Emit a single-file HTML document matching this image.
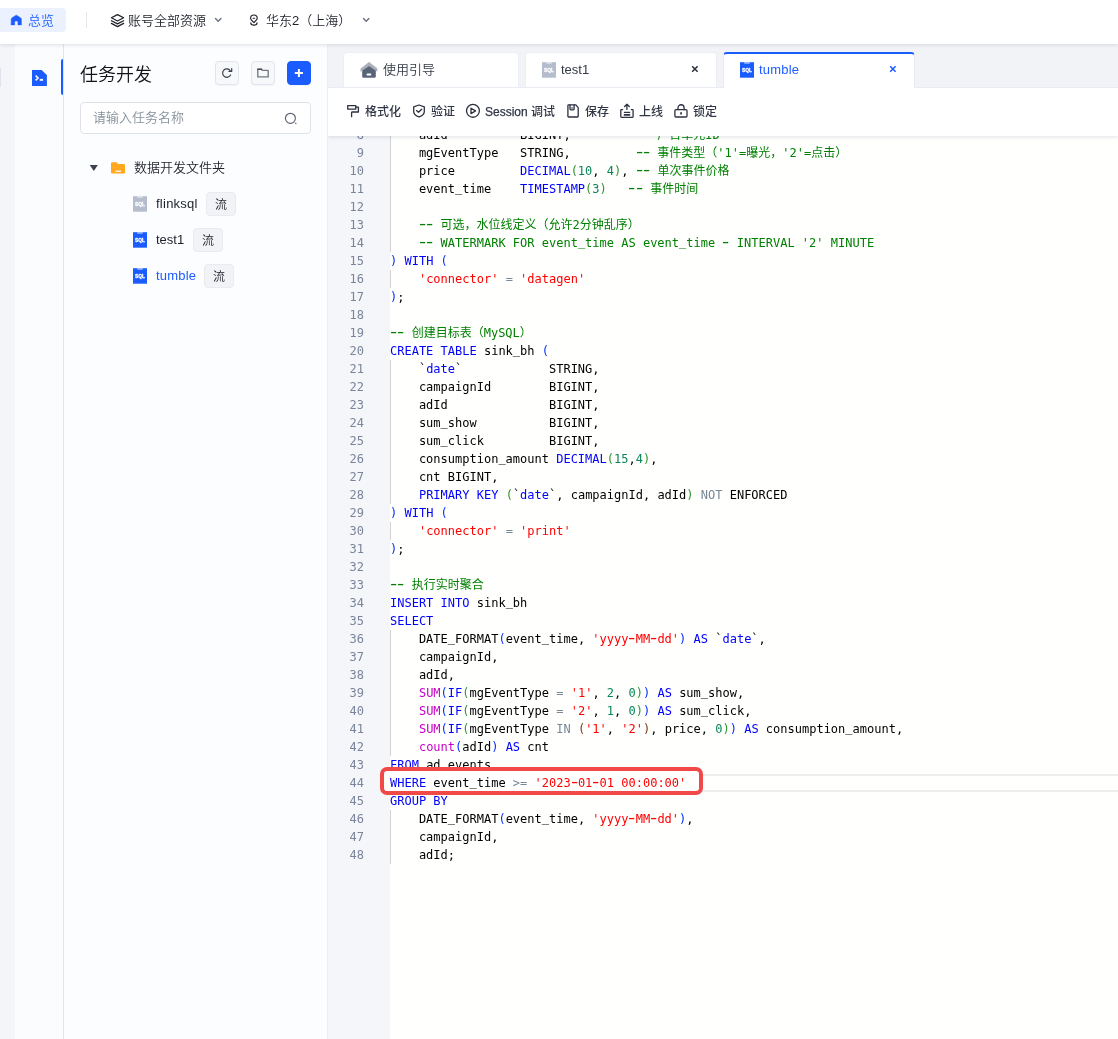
<!DOCTYPE html>
<html lang="zh-CN">
<head>
<meta charset="utf-8">
<title>任务开发</title>
<style>
*{box-sizing:border-box;margin:0;padding:0}
html,body{width:1118px;height:1039px;overflow:hidden;background:#fff}
body{position:relative;font-family:"Liberation Sans","Noto Sans CJK SC",sans-serif;font-size:13px;color:#1d2129;font-weight:350}
#root{position:absolute;left:0;top:0;width:1118px;height:1039px;will-change:transform}
.abs{position:absolute}
svg{display:block;overflow:visible}
/* top bar */
#top{position:absolute;left:0;top:0;width:1118px;height:44px;background:#fff;box-shadow:0 1px 4px rgba(20,30,60,.13);z-index:20}
#top .pill{position:absolute;left:-6px;top:8px;width:72px;height:24px;border-radius:4px;background:#ebf1ff}
#top .t{position:absolute;top:1px;height:40px;line-height:40px;font-size:13px;color:#1d2129;white-space:nowrap}
/* far-left strip */
#strip0{position:absolute;left:0;top:44px;width:15px;height:995px;background:#f4f5f9}
#strip1{position:absolute;left:15px;top:44px;width:48px;height:995px;background:#fbfcfe}
#vline{position:absolute;left:63px;top:44px;width:1px;height:995px;background:#e3e5ea}
#ind{position:absolute;left:61px;top:59px;width:2px;height:36px;background:#1b5cff;border-radius:2px 0 0 2px}
/* left panel */
#panel{position:absolute;left:64px;top:44px;width:263px;height:995px;background:#fcfdfe}
#pline{position:absolute;left:327px;top:44px;width:1px;height:995px;background:#eceef2}
.h1{position:absolute;left:80px;top:61.5px;height:26px;line-height:26px;font-size:18px;color:#111318;white-space:nowrap}
.ibtn{position:absolute;top:61px;width:24px;height:24px;border-radius:4px;background:#f7f8fa;border:1px solid #e2e6ee;box-shadow:0 1px 1px rgba(30,40,80,.05)}
.ibtn.blue{background:#1b5cff;border-color:#1b5cff}
#search{position:absolute;left:80px;top:102px;width:231px;height:32px;border:1px solid #dfe2e8;border-radius:4px;background:#fff}
#search span{position:absolute;left:12px;top:0;line-height:30px;font-size:13px;color:#86909c}
.row{position:absolute;height:24px;line-height:24px;font-size:13px;white-space:nowrap;color:#1d2129}
.tag{position:absolute;height:24px;width:30px;border:1px solid #e9ebf0;background:#f2f3f6;border-radius:4px;font-size:12px;line-height:22px;padding-top:1px;text-align:center;color:#1d2129}
/* editor area */
#area{position:absolute;left:328px;top:44px;width:790px;height:995px;background:#f2f3f7}
.tab{position:absolute;top:52px;height:36px;background:#fff;border:1px solid #eceef3;border-bottom:none;border-radius:4px 4px 0 0}
.tab .tx{position:absolute;top:0;line-height:33px;font-size:13px;color:#333946;white-space:nowrap}
.tab.act{border:1px solid #e8ebf2;border-bottom:none;border-top:2px solid #1b5cff;z-index:11}
.tab.act .tx{color:#1b5cff;line-height:31px;margin-left:-1px}
#tool{position:absolute;left:328px;top:87px;width:790px;height:49px;background:#fff;border-top:1px solid #e9ecf2;box-shadow:0 2px 3px rgba(20,30,60,.09);z-index:10;clip-path:inset(0 0 -10px 0)}
#tool .ti{position:absolute;top:-1px;line-height:51px;font-size:12px;font-weight:500;color:#303645;white-space:nowrap}
/* code */
#gutter{position:absolute;left:328px;top:126px;width:62px;height:913px;background:#f5f6fa}
#codebg{position:absolute;left:390px;top:126px;width:728px;height:913px;background:#fffffe}
#nums{position:absolute;left:328px;top:126px;width:36px;text-align:right}
#nums div,#code div{height:18px;line-height:18px;font-family:"DejaVu Sans Mono","Liberation Mono","Noto Sans CJK SC",monospace;font-size:12px;white-space:pre}
#nums div{color:#7a849a}
#code{position:absolute;left:390px;top:126px;color:#000;font-weight:400}
#code div{position:relative}
.k{color:#0000ff}.s{color:#ff0000}.c{color:#008000}.n{color:#098658}.o{color:#778899}.f{color:#c700c7}
#code i{font-style:normal;display:inline-block;transform:translateY(-0.7px) scale(1.7,1.25)}
#code b{font-weight:normal;display:inline-block;transform:translateY(-1px)}
.b1{color:#0431fa}.b2{color:#319331}.b3{color:#7b3814}
.g{position:absolute;left:390px;width:1px;background:#d3d3d3}
#cur{position:absolute;left:390px;top:774px;width:740px;height:18px;border:2px solid #eee}
#red{position:absolute;left:-10px;top:-7px;z-index:-1;width:323px;height:28px;border:4px solid #f14848;border-radius:7px;background:#fff}
</style>
</head>
<body>
<div id="root">

<!-- far-left strips and panel -->
<div id="strip0"></div><div class="abs" style="left:0;top:68px;width:1px;height:19px;background:#dfe3ec"></div><div id="strip1"></div><div id="vline"></div>
<div id="panel"></div><div id="pline"></div>
<div id="area"></div>

<!-- code editor -->
<div id="gutter"></div><div id="codebg"></div>
<div id="cur"></div>
<div class="g" style="top:126px;height:126px"></div>
<div class="g" style="top:270px;height:18px"></div>
<div class="g" style="top:360px;height:144px"></div>
<div class="g" style="top:522px;height:18px"></div>
<div class="g" style="top:630px;height:126px"></div>
<div class="g" style="top:810px;height:54px"></div>
<div id="nums"><div>8</div><div>9</div><div>10</div><div>11</div><div>12</div><div>13</div><div>14</div><div>15</div><div>16</div><div>17</div><div>18</div><div>19</div><div>20</div><div>21</div><div>22</div><div>23</div><div>24</div><div>25</div><div>26</div><div>27</div><div>28</div><div>29</div><div>30</div><div>31</div><div>32</div><div>33</div><div>34</div><div>35</div><div>36</div><div>37</div><div>38</div><div>39</div><div>40</div><div>41</div><div>42</div><div>43</div><div>44</div><div>45</div><div>46</div><div>47</div><div>48</div></div>
<div id="code">
<div>    adId          BIGINT,         <span class="c"><i>-</i><i>-</i> 广告单元ID</span></div>
<div>    mgEventType   STRING,         <span class="c"><i>-</i><i>-</i> 事件类型（'1'=曝光，'2'=点击）</span></div>
<div>    price         <span class="k">DECIMAL</span><span class="b2">(</span><span class="n">10</span>, <span class="n">4</span><span class="b2">)</span>, <span class="c"><i>-</i><i>-</i> 单次事件价格</span></div>
<div>    event<b>_</b>time    <span class="k">TIMESTAMP</span><span class="b2">(</span><span class="n">3</span><span class="b2">)</span>   <span class="c"><i>-</i><i>-</i> 事件时间</span></div>
<div> </div>
<div>    <span class="c"><i>-</i><i>-</i> 可选，水位线定义（允许2分钟乱序）</span></div>
<div>    <span class="c"><i>-</i><i>-</i> WATERMARK FOR event<b>_</b>time AS event<b>_</b>time <i>-</i> INTERVAL '2' MINUTE</span></div>
<div><span class="b1">)</span> <span class="k">WITH</span> <span class="b1">(</span></div>
<div>    <span class="s">'connector'</span> <span class="o">=</span> <span class="s">'datagen'</span></div>
<div><span class="b1">)</span>;</div>
<div> </div>
<div><span class="c"><i>-</i><i>-</i> 创建目标表（MySQL）</span></div>
<div><span class="k">CREATE</span> <span class="k">TABLE</span> sink<b>_</b>bh <span class="b1">(</span></div>
<div>    `<span class="k">date</span>`            STRING,</div>
<div>    campaignId        BIGINT,</div>
<div>    adId              BIGINT,</div>
<div>    sum<b>_</b>show          BIGINT,</div>
<div>    sum<b>_</b>click         BIGINT,</div>
<div>    consumption<b>_</b>amount <span class="k">DECIMAL</span><span class="b2">(</span><span class="n">15</span>,<span class="n">4</span><span class="b2">)</span>,</div>
<div>    cnt BIGINT,</div>
<div>    <span class="k">PRIMARY</span> <span class="k">KEY</span> <span class="b2">(</span>`<span class="k">date</span>`, campaignId, adId<span class="b2">)</span> <span class="o">NOT</span> ENFORCED</div>
<div><span class="b1">)</span> <span class="k">WITH</span> <span class="b1">(</span></div>
<div>    <span class="s">'connector'</span> <span class="o">=</span> <span class="s">'print'</span></div>
<div><span class="b1">)</span>;</div>
<div> </div>
<div><span class="c"><i>-</i><i>-</i> 执行实时聚合</span></div>
<div><span class="k">INSERT</span> <span class="k">INTO</span> sink<b>_</b>bh</div>
<div><span class="k">SELECT</span></div>
<div>    DATE<b>_</b>FORMAT<span class="b1">(</span>event<b>_</b>time, <span class="s">'yyyy<i>-</i>MM<i>-</i>dd'</span><span class="b1">)</span> <span class="k">AS</span> `<span class="k">date</span>`,</div>
<div>    campaignId,</div>
<div>    adId,</div>
<div>    <span class="f">SUM</span><span class="b1">(</span><span class="k">IF</span><span class="b2">(</span>mgEventType <span class="o">=</span> <span class="s">'1'</span>, <span class="n">2</span>, <span class="n">0</span><span class="b2">)</span><span class="b1">)</span> <span class="k">AS</span> sum<b>_</b>show,</div>
<div>    <span class="f">SUM</span><span class="b1">(</span><span class="k">IF</span><span class="b2">(</span>mgEventType <span class="o">=</span> <span class="s">'2'</span>, <span class="n">1</span>, <span class="n">0</span><span class="b2">)</span><span class="b1">)</span> <span class="k">AS</span> sum<b>_</b>click,</div>
<div>    <span class="f">SUM</span><span class="b1">(</span><span class="k">IF</span><span class="b2">(</span>mgEventType <span class="o">IN</span> <span class="b3">(</span><span class="s">'1'</span>, <span class="s">'2'</span><span class="b3">)</span>, price, <span class="n">0</span><span class="b2">)</span><span class="b1">)</span> <span class="k">AS</span> consumption<b>_</b>amount,</div>
<div>    <span class="f">count</span><span class="b1">(</span>adId<span class="b1">)</span> <span class="k">AS</span> cnt</div>
<div><span class="k">FROM</span> ad<b>_</b>events</div>
<div style="z-index:5"><span id="red"></span><span class="k">WHERE</span> event<b>_</b>time <span class="o">&gt;=</span> <span class="s">'2023<i>-</i>01<i>-</i>01 00:00:00'</span></div>
<div><span class="k">GROUP</span> <span class="k">BY</span></div>
<div>    DATE<b>_</b>FORMAT<span class="b1">(</span>event<b>_</b>time, <span class="s">'yyyy<i>-</i>MM<i>-</i>dd'</span><span class="b1">)</span>,</div>
<div>    campaignId,</div>
<div>    adId;</div>
</div>

<!-- tabs -->
<div class="tab" style="left:343px;width:176px"><span class="tx" style="left:39px">使用引导</span></div>
<div class="tab" style="left:525px;width:192px"><span class="tx" style="left:35px">test1</span></div>
<div class="tab act" style="left:723px;width:192px"><span class="tx" style="left:36px;letter-spacing:0.2px">tumble</span></div>

<!-- toolbar -->
<div id="tool">
<span class="ti" style="left:37px">格式化</span>
<span class="ti" style="left:103px">验证</span>
<span class="ti" style="left:157px"><span style="-webkit-text-stroke:0.25px #303645">Session</span> 调试</span>
<span class="ti" style="left:257px">保存</span>
<span class="ti" style="left:311px">上线</span>
<span class="ti" style="left:365px">锁定</span>
</div>

<!-- left panel content -->
<div id="ind"></div>
<div class="h1">任务开发</div>
<div class="ibtn" style="left:215px"></div>
<div class="ibtn" style="left:251px"></div>
<div class="ibtn blue" style="left:287px"></div>
<div id="search"><span>请输入任务名称</span></div>
<div class="row" style="left:134px;top:156px">数据开发文件夹</div>
<div class="row" style="left:156px;top:192px;letter-spacing:0.25px">flinksql</div><div class="tag" style="left:206px;top:192px">流</div>
<div class="row" style="left:156px;top:228px">test1</div><div class="tag" style="left:193px;top:228px">流</div>
<div class="row" style="left:156px;top:264px;color:#1b5cff;letter-spacing:0.2px">tumble</div><div class="tag" style="left:204px;top:264px">流</div>

<!-- top bar -->
<div id="top">
<div class="pill"></div>
<span class="t" style="left:28px;color:#1b5cff">总览</span>
<div class="abs" style="left:86px;top:12px;width:1px;height:16px;background:#e5e6eb"></div>
<span class="t" style="left:128px">账号全部资源</span>
<span class="t" style="left:266px">华东2（上海）</span>
</div>


<!-- icon overlay -->
<svg id="icons" width="1118" height="1039" viewBox="0 0 1118 1039" style="position:absolute;left:0;top:0;z-index:30" fill="none" stroke-linecap="round" stroke-linejoin="round">
<defs>
<g id="sqlg"><path d="M0,0.2 H14 V15.7 H0 Z" stroke="none"/><path d="M4,0.2 L4.5,1.7 H9.5 L10,0.2 Z" fill="#fff" fill-opacity="0.6" stroke="none"/><text x="7" y="10.25" text-anchor="middle" font-family="Liberation Sans, sans-serif" font-weight="bold" font-size="4.8" fill="#fff" stroke="#fff" stroke-width="0.3">SQL</text></g>
<g id="chev"><path d="M0.5,0.2 L3.2,2.9 L5.9,0.2" stroke="#687082" stroke-width="1.4"/></g>
<g id="xx"><path d="M0,0 L5.4,5.4 M5.4,0 L0,5.4" stroke-width="1.55" stroke-linecap="butt"/></g>
</defs>
<!-- top bar: home -->
<path d="M11.2,19.1 Q11.2,18.5 11.7,18.1 L15.5,15.4 Q16.3,14.9 17.1,15.4 L20.9,18.1 Q21.4,18.5 21.4,19.1 V24.9 H17.9 V21.9 Q17.9,21 17,21 H15.6 Q14.7,21 14.7,21.9 V24.9 H11.2 Z" fill="#1b5cff" stroke="#1b5cff" stroke-width="0.4"/>
<!-- layers -->
<g stroke="#1d2129" stroke-width="1.25"><path d="M117.5,14.6 L123.6,17.8 L117.5,21 L111.4,17.8 Z"/><path d="M111.4,20.7 L117.5,23.9 L123.6,20.7"/><path d="M111.4,23.4 L117.5,26.6 L123.6,23.4"/></g>
<use href="#chev" x="215" y="18.3"/>
<!-- location -->
<g stroke="#1d2129" stroke-width="1.15"><path d="M253.9,22.6 C251.6,20.6 250.6,19.6 250.6,18.3 A3.3,3.3 0 0 1 257.2,18.3 C257.2,19.6 256.2,20.6 253.9,22.6 Z"/><path d="M253.2,18.2 H254.6"/><path d="M250.8,22.9 Q250.8,25.1 253.9,25.1 Q257,25.1 257,22.9"/></g>
<use href="#chev" x="363" y="18.3"/>
<!-- far-left file icon -->
<path d="M32,70 H41.6 L46.9,74.9 V86 H32 Z" fill="#1b5cff"/>
<path d="M35.6,75.6 L38.1,78 L35.6,80.4" stroke="#fff" stroke-width="1.5" stroke-linejoin="miter" stroke-linecap="butt"/><rect x="39.7" y="78.9" width="3.4" height="1.9" fill="#fff"/>
<!-- refresh -->
<g stroke="#3a3f4b" stroke-width="1.2"><path d="M230.6,75 A4.2,4.2 0 1 1 230.2,70.6"/><path d="M231.7,68.7 V71.4 H229"/></g>
<!-- folder outline -->
<g stroke="#73777f" stroke-width="1.35"><path d="M257.8,69.3 H261.4 L262.3,70.3 H268.2 V76.9 H257.8 Z"/></g><path d="M257.6,69.2 H261.6" stroke="#3c3f48" stroke-width="1.3"/>
<!-- plus -->
<path d="M294.8,73 H303 M298.9,68.9 V77.1" stroke="#fff" stroke-width="2" stroke-linecap="butt"/>
<!-- search -->
<g stroke="#5d6473" stroke-width="1.15"><circle cx="290.4" cy="118.3" r="5"/><path d="M295.6,123.2 L296,123.6"/></g>
<!-- caret -->
<path d="M89.7,165 H97.9 L93.8,171 Z" fill="#3d4250"/>
<!-- folder filled -->
<path d="M111,163.2 Q111,162.2 112,162.2 H116.6 L118.3,164 H124 Q125,164 125,165 V172.6 Q125,173.6 124,173.6 H112 Q111,173.6 111,172.6 Z" fill="#ffa820"/><rect x="115.4" y="170.6" width="5.6" height="1.2" fill="#fff"/>
<!-- sql icons -->
<use href="#sqlg" x="133" y="196" fill="#b4bccd"/>
<use href="#sqlg" x="133" y="232" fill="#1b5cff"/>
<use href="#sqlg" x="133" y="268" fill="#1b5cff"/>
<use href="#sqlg" x="542" y="62" fill="#b4bccd"/>
<use href="#sqlg" x="740" y="62" fill="#1b5cff"/>
<!-- tab home icon -->
<path d="M360.9,68.5 L369,62.2 L377.1,68.5 V71.2 L369,66 L360.9,71.2 Z" fill="#a9afbb" stroke="#a9afbb" stroke-width="0.5"/>
<path d="M362.2,70.4 L369,66 L375.8,70.4 V76.2 Q375.8,77.7 374.3,77.7 H363.7 Q362.2,77.7 362.2,76.2 Z" fill="#5a6478"/>
<rect x="366.6" y="73.5" width="4.6" height="1.9" rx="0.5" fill="#fff"/>
<!-- close x -->
<use href="#xx" x="692.2" y="66.3" stroke="#2a2f3a"/>
<use href="#xx" x="890.2" y="66.3" stroke="#1b5cff"/>
<!-- toolbar icons -->
<g stroke="#2c3140" stroke-width="1.3">
<!-- format -->
<path d="M347.7,105.7 H355.8 V109.1 H347.7 Z"/><path d="M355.8,107.2 H358.4 V112 H352.4 Q351.6,112 351.6,112.8 V116.7"/>
<!-- shield -->
<path d="M419,105 L424.3,106.8 V111.4 C424.3,114 422,115.8 419,116.9 C416,115.8 413.7,114 413.7,111.4 V106.8 Z"/><path d="M416.5,110.6 L418.5,112.3 L421.7,109.2"/>
<!-- play -->
<circle cx="472.95" cy="110.8" r="6.45"/><path d="M471,108.2 L475.6,110.9 L471,113.6 Z"/>
<!-- save -->
<path d="M568.6,104.9 H575.8 L578.2,107.6 V116.3 Q578.2,117 577.5,117 H568.6 Q567.9,117 567.9,116.3 V105.6 Q567.9,104.9 568.6,104.9 Z"/><path d="M570,105 V109 Q570,109.8 570.8,109.8 H573.3 Q574.1,109.8 574.1,109 V105"/>
<!-- upload -->
<path d="M622.6,109.6 H621.5 Q620.8,109.6 620.8,110.3 V116.6 Q620.8,117.3 621.5,117.3 H632.4 Q633.1,117.3 633.1,116.6 V110.3 Q633.1,109.6 632.4,109.6 H631.3"/><path d="M626.9,109.4 V104.8 M624.6,106.5 L626.9,104.3 L629.3,106.5"/><path d="M624.4,112.4 H629.6"/><path d="M624.4,114.9 H629.6" stroke-width="1.6"/>
<!-- lock -->
<rect x="674.9" y="109.7" width="12.1" height="7.3" rx="1"/><path d="M678,109.7 V107.8 A3.05,3.05 0 0 1 684.1,107.8 V109.7"/><path d="M681.05,112.3 V114.4" stroke-width="1.7" stroke-linecap="butt"/>
</g>
<rect x="571.2" y="107" width="1.7" height="1.9" fill="#80848f"/>
</svg>

</div>
</body>
</html>
